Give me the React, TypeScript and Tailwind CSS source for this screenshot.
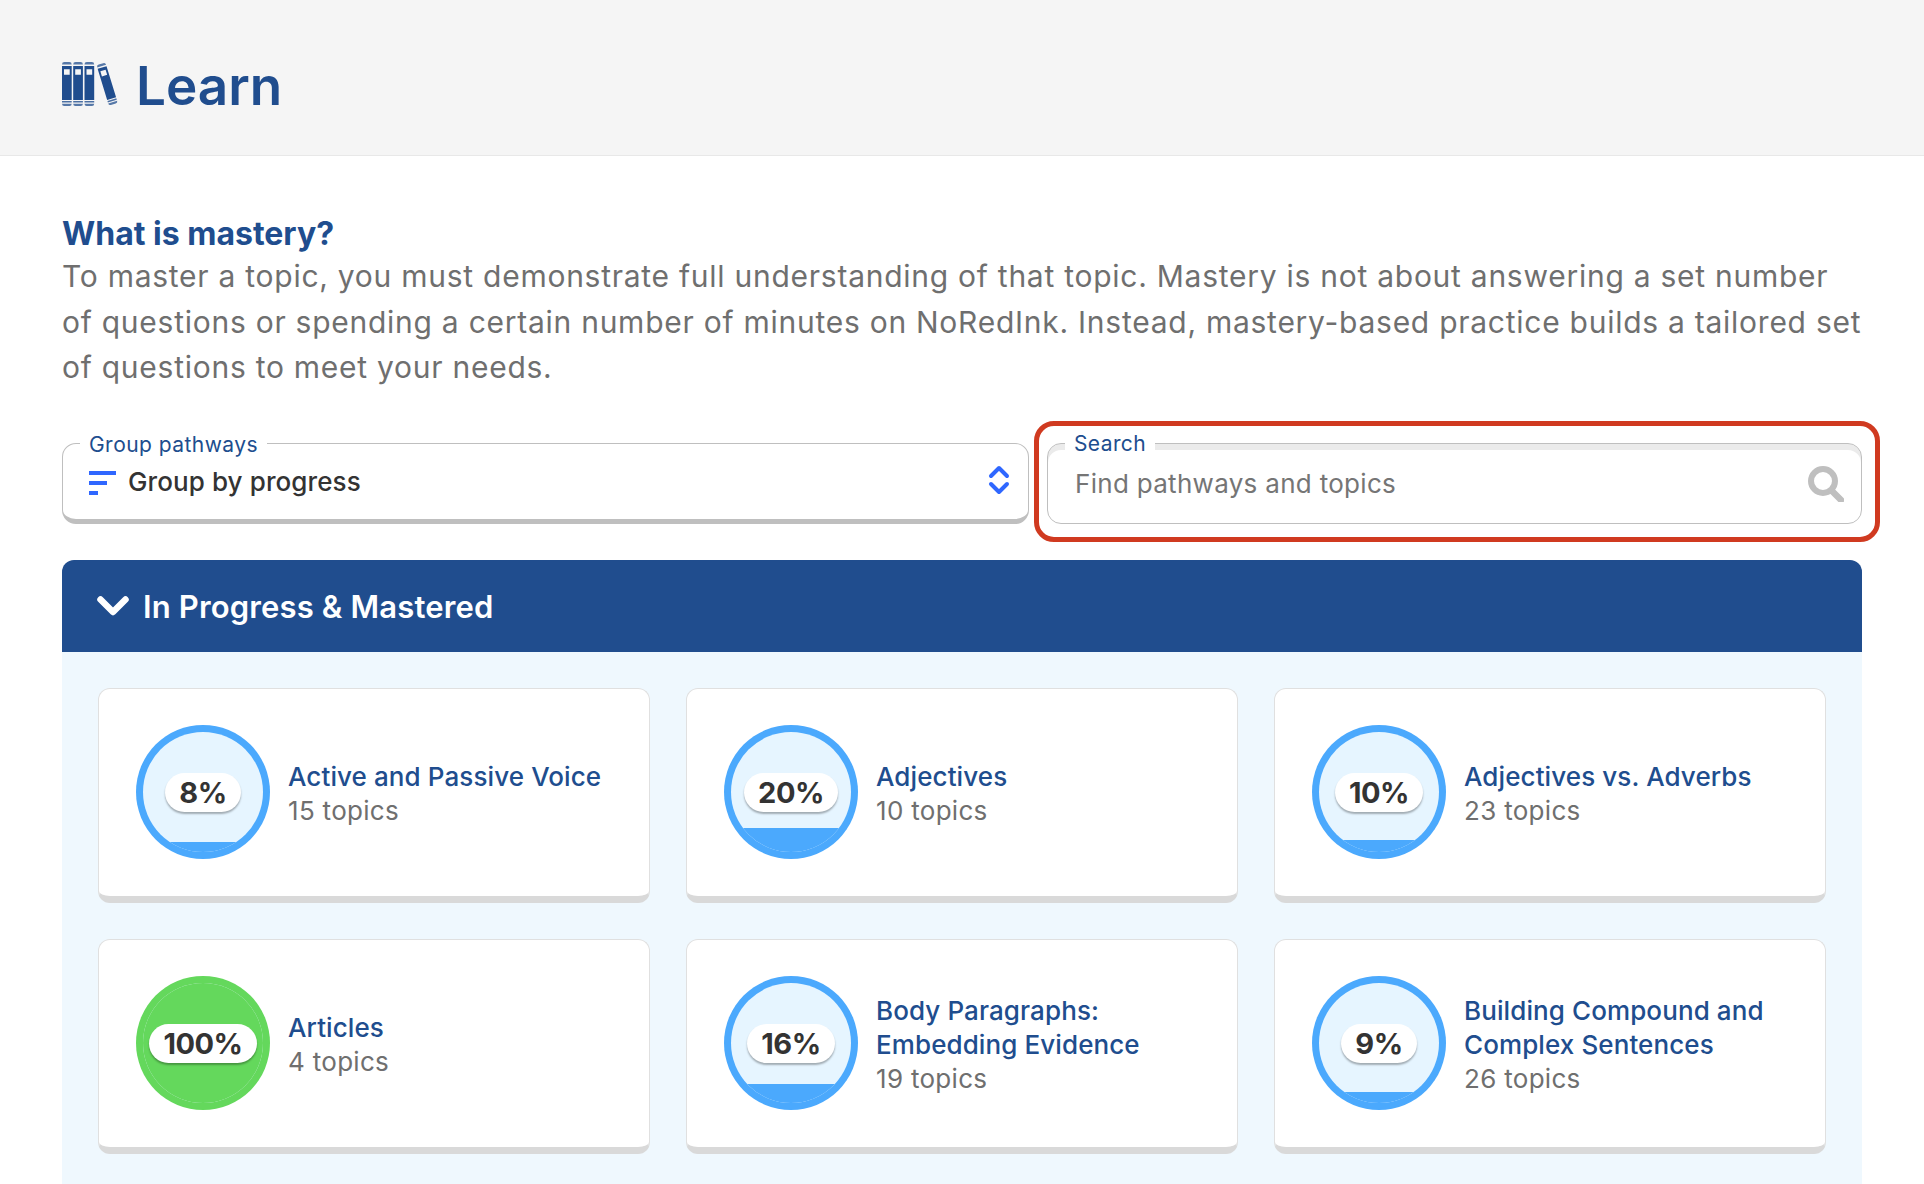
import React from 'react';

const topics = [
  { name: 'Active and Passive Voice', count: '15 topics', pct: 8 },
  { name: 'Adjectives', count: '10 topics', pct: 20 },
  { name: 'Adjectives vs. Adverbs', count: '23 topics', pct: 10 },
  { name: 'Articles', count: '4 topics', pct: 100 },
  { name: 'Body Paragraphs: Embedding Evidence', count: '19 topics', pct: 16 },
  { name: 'Building Compound and Complex Sentences', count: '26 topics', pct: 9 },
];

const Book = ({ x }: { x: number }) => (
  <g transform={`translate(${x},0)`}>
    <path d="M0 2.4a2.4 2.4 0 0 1 2.4-2.4h4.9a2.4 2.4 0 0 1 2.4 2.4h-9.7z" opacity="0.75" />
    <path fillRule="evenodd" d="M0 4h9.700v34H0zM2 7.200v5.600h5.700V7.200z" />
    <rect y="39" width="9.7" height="1.5" opacity="0.8" />
    <path d="M0 41.800h9.700a2.200 2.200 0 0 1-2.200 2.200H2.200A2.200 2.200 0 0 1 0 41.800z" opacity="0.75" />
  </g>
);

const BooksIcon = () => (
  <svg viewBox="0 0 56 44" className="w-[56px] h-[44px] fill-[#204d8e] shrink-0">
    <Book x={0} />
    <Book x={11.2} />
    <Book x={22.5} />
    <g transform="translate(34.5,3.2) rotate(-17) scale(0.96)">
      <Book x={0} />
    </g>
  </svg>
);

const Progress = ({ pct }: { pct: number }) => {
  const done = pct === 100;
  return (
    <div className={`relative w-[134px] h-[134px] rounded-full p-[7px] shrink-0 ${done ? 'bg-[#64d85c]' : 'bg-[#4ba9fd]'}`}>
      <div className="relative w-full h-full rounded-full overflow-hidden bg-[#e6f5ff]">
        <div className={`absolute bottom-0 left-0 right-0 ${done ? 'bg-[#64d85c]' : 'bg-[#4ba9fd]'}`} style={{ height: `${pct}%` }} />
      </div>
      <div className="absolute inset-0 flex items-center justify-center">
        <span className="h-[39px] px-[14px] pt-[1px] rounded-[20px] bg-white flex items-center text-[#333] text-[29px] font-bold tracking-[-0.5px] shadow-[0_2px_2px_rgba(0,0,0,0.3)]">
          {pct}%
        </span>
      </div>
    </div>
  );
};

export default function App() {
  return (
    <div className="h-screen overflow-hidden bg-white font-['Inter',sans-serif]">
      {/* Header */}
      <header className="h-[156px] bg-[#f5f5f5] border-b border-[#e8e8e8] pl-[62px] pt-[12px] flex items-center gap-[18px]">
        <BooksIcon />
        <h1 className="mt-[5px] text-[53px] font-semibold text-[#204d8e] leading-none">Learn</h1>
      </header>

      <main className="px-[62px] pt-[58px]">
        <h2 className="text-[32px] leading-[40px] font-bold text-[#204d8e]">What is mastery?</h2>
        <p className="text-[30px] leading-[45.5px] tracking-[0.74px] text-[#6f6f6f] whitespace-nowrap">
          To master a topic, you must demonstrate full understanding of that topic. Mastery is not about answering a set number
          <br />
          of questions or spending a certain number of minutes on NoRedInk. Instead, mastery-based practice builds a tailored set
          <br />
          of questions to meet your needs.
        </p>

        <div className="flex gap-[18px] mt-[52px]">
          {/* Group select */}
          <div className="relative w-[967px] h-[81px] border border-[#bfbfbf] border-b-[5px] rounded-[14px] bg-white flex items-center pl-[26px] pr-[18px]">
            <span className="absolute left-[17px] -top-[12px] h-[26px] px-[9px] bg-white text-[21px] leading-[26px] tracking-[0.45px] text-[#204d8e]">Group pathways</span>
            <svg viewBox="0 0 27 24" className="w-[27px] h-[24px] fill-[#2f67ff] mt-[4px]">
              <rect width="27" height="4" />
              <rect y="10" width="18" height="4" />
              <rect y="20" width="9" height="4" />
            </svg>
            <span className="ml-[12px] mt-[1px] text-[26px] font-medium tracking-[0.1px] text-[#333]">Group by progress</span>
            <svg viewBox="0 0 22 30" fill="none" className="ml-auto w-[22px] h-[30px] stroke-[#2f67ff] -mt-[2px]" strokeWidth="4" strokeLinecap="round" strokeLinejoin="round">
              <path d="M3 11l8-8 8 8" />
              <path d="M3 19l8 8 8-8" />
            </svg>
          </div>

          {/* Search */}
          <div className="relative flex-1 h-[81px]">
            <div className="h-full border border-[#bfbfbf] rounded-[14px] bg-white shadow-[inset_0_6px_0_0_#ebebeb] flex items-center pl-[27px] pr-[17px]">
              <span className="mt-[1px] text-[26px] tracking-[0.3px] text-[#757575]">Find pathways and topics</span>
              <svg viewBox="0 0 36 36" fill="none" className="ml-auto w-[36px] h-[36px] mt-[2px] stroke-[#bfbfbf]" strokeLinecap="round">
                <circle cx="15" cy="15" r="12" strokeWidth="6" />
                <path d="M24 25l9 9" strokeWidth="6.500" />
              </svg>
            </div>
            <span className="absolute left-[18px] -top-[12px] h-[26px] px-[9px] bg-white text-[21px] leading-[26px] tracking-[0.4px] text-[#204d8e]">Search</span>
            {/* red annotation */}
            <div className="absolute -left-[13px] -top-[22px] -right-[18px] -bottom-[18px] border-[5px] border-[#d03a20] rounded-[20px] pointer-events-none" />
          </div>
        </div>

        {/* Panel */}
        <section className="mt-[36px]">
          <div className="h-[92px] rounded-t-[12px] bg-[#204d8e] flex items-center pl-[35px] gap-[14px]">
            <svg viewBox="0 0 32 20" fill="none" className="w-[32px] h-[20px] stroke-white" strokeWidth="6.5" strokeLinecap="round" strokeLinejoin="round">
              <path d="M3.500 3.500L16 16 28.500 3.500" />
            </svg>
            <span className="mt-[4px] text-[31px] font-semibold tracking-[0.15px] text-white">In Progress &amp; Mastered</span>
          </div>
          <div className="bg-[#eff8fe] px-[36px] pt-[36px] pb-[36px] grid grid-cols-3 gap-[36px]">
            {topics.map((t) => (
              <div key={t.name} className="h-[215px] bg-white border border-[#e0e0e0] border-b-[7px] border-b-[#d9d9d9] rounded-[12px] flex items-center pl-[37px] pr-[30px] gap-[18px]">
                <Progress pct={t.pct} />
                <div className="mt-[4px]">
                  <div className="text-[26px] leading-[34px] font-medium tracking-[0.1px] text-[#204d8e]">{t.name}</div>
                  <div className="text-[26px] leading-[34px] tracking-[0.3px] text-[#6f6f6f]">{t.count}</div>
                </div>
              </div>
            ))}
          </div>
        </section>
      </main>
    </div>
  );
}
